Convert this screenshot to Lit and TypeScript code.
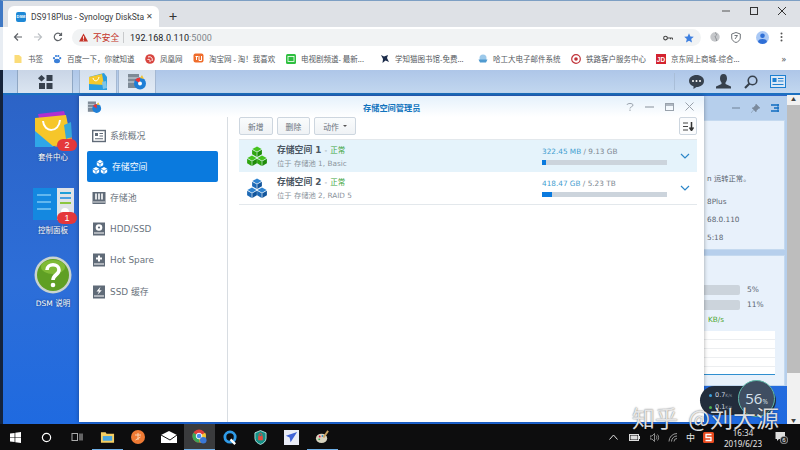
import { LitElement, html, css } from "lit";
import { customElement } from "lit/decorators.js";

const cube = (top: string, left: string, right: string) => html`
  <svg class="cube" viewBox="0 0 20 20" width="20" height="20">
    ${[[10, 0.5], [5, 9.5], [15, 9.5]].map(
      ([x, y]) => html`
        <svg x=${x - 5} y=${y} width="10" height="10" viewBox="0 0 10 10" overflow="visible">
          <path d="M5 0L9.6 2.6 5 5.2 .4 2.6z" fill=${top} />
          <path d="M.1 3.2L4.7 5.8V10.4L.1 7.8z" fill=${left} />
          <path d="M9.9 3.2L5.3 5.8V10.4L9.9 7.8z" fill=${right} />
        </svg>
      `
    )}
  </svg>
`;

const navIcons = [
  html`<svg viewBox="0 0 14 14" width="14" height="14"><rect x=".7" y="1.5" width="12.6" height="11" fill="none" stroke="#606b78" stroke-width="1.4"/><rect x="3" y="4" width="3" height="3" fill="#606b78"/><path d="M7.5 4.5H11M7.5 7H11M3 9.7H11" stroke="#606b78" stroke-width="1.1"/></svg>`,
  html`<svg viewBox="0 0 20 20" width="16" height="16"><path d="M10 1l4 2.3v4.4L10 10 6 7.7V3.3zM5 10l4 2.3v4.4L5 19l-4-2.3V12.3zM15 10l4 2.3v4.4L15 19l-4-2.3v-4.4z" fill="#fff"/><path d="M6 3.5L10 6l4-2.5M1 12.5L5 15l4-2.5M11 12.5L15 15l4-2.5M10 6v4M5 15v4M15 15v4" stroke="#0a7ade" stroke-width=".9" fill="none"/></svg>`,
  html`<svg viewBox="0 0 14 14" width="14" height="14"><rect x=".5" y="1" width="13" height="12" fill="#606b78"/><path d="M4 2.5V8.5M7 2.5V8.5M10 2.5V8.5" stroke="#fff" stroke-width="1.6"/><path d="M1 11H13" stroke="#fff" stroke-width=".8"/></svg>`,
  html`<svg viewBox="0 0 14 14" width="14" height="14"><rect x="1" y=".5" width="12" height="13" fill="#606b78"/><circle cx="7" cy="5.5" r="3.3" fill="#fff"/><circle cx="7" cy="5.5" r="1.1" fill="#606b78"/><path d="M2 11H12" stroke="#fff" stroke-width="1"/></svg>`,
  html`<svg viewBox="0 0 14 14" width="14" height="14"><rect x="1" y=".5" width="12" height="13" fill="#606b78"/><path d="M7 2.5V8.5M4 5.5H10" stroke="#fff" stroke-width="2"/><path d="M2 11H12" stroke="#fff" stroke-width="1"/></svg>`,
  html`<svg viewBox="0 0 14 14" width="14" height="14"><rect x="1" y=".5" width="12" height="13" fill="#606b78"/><path d="M8.5 1.8L4.5 6.5H7L5.5 9.8 9.8 5.2H7.3z" fill="#fff"/><path d="M2 11H12" stroke="#fff" stroke-width="1"/></svg>`,
];

const bookmarkIcons = [
  html`<svg viewBox="0 0 10 10" width="10" height="10"><path d="M1.5 1H6L8.5 3V9H1.5z" fill="#fbdc78"/></svg>`,
  html`<svg viewBox="0 0 10 10" width="10" height="10"><g fill="#3a7fd8"><ellipse cx="5" cy="7" rx="3" ry="2.2"/><circle cx="2" cy="4.2" r="1.1"/><circle cx="4" cy="2" r="1.1"/><circle cx="6.3" cy="2" r="1.1"/><circle cx="8.2" cy="4.2" r="1.1"/></g></svg>`,
  html`<svg viewBox="0 0 10 10" width="10" height="10"><circle cx="5" cy="5" r="4.8" fill="#d8453f"/><path d="M3 3C6 2 8 4 7 7M2.5 5.5C4.5 5 5.5 6 5 8" stroke="#fff" fill="none"/></svg>`,
  html`<svg viewBox="0 0 11 11" width="11" height="11"><rect x=".5" y=".5" width="10" height="9" rx="2" fill="#ef6c2b"/><path d="M2.5 3.5H5M3.5 3V7M6 3V7.5H8.5V3" stroke="#fff" fill="none"/></svg>`,
  html`<svg viewBox="0 0 10 10" width="10" height="10"><rect width="10" height="10" rx="1.5" fill="#2ebf3f"/><rect x="2" y="2.5" width="6" height="5" fill="none" stroke="#fff" stroke-width=".8"/></svg>`,
  html`<svg viewBox="0 0 10 10" width="10" height="10"><path d="M1 1L4 2.5 8 1 7 4 9 8 5.5 6.5 2.5 9 3 5z" fill="#1c2c4a"/></svg>`,
  html`<svg viewBox="0 0 10 10" width="10" height="10"><circle cx="5" cy="4" r="3.5" fill="#9cc9ea"/><path d="M.5 5.5H9.5L8 8.5H2z" fill="#4f9ad0"/></svg>`,
  html`<svg viewBox="0 0 10 10" width="10" height="10"><circle cx="5" cy="5" r="4.3" fill="none" stroke="#c0343a" stroke-width="1.2"/><circle cx="5" cy="5" r="1.8" fill="#c0343a"/></svg>`,
  html`<svg viewBox="0 0 10 10" width="10" height="10"><rect width="10" height="10" fill="#d3232f"/><text x="5" y="7.5" text-anchor="middle" font-size="6.5" font-weight="700" fill="#fff" font-family="Liberation Sans">JD</text></svg>`,
];

const bookmarks = [
  { label: "书签", width: 39 },
  { label: "百度一下，你就知道", width: 93 },
  { label: "凤凰网", width: 48 },
  { label: "淘宝网 - 淘！我喜欢", width: 93 },
  { label: "电视剧频道- 最新...", width: 94 },
  { label: "学知猫图书馆-免费...", width: 98 },
  { label: "哈工大电子邮件系统", width: 93 },
  { label: "铁路客户服务中心", width: 85 },
  { label: "京东网上商城-综合...", width: 85 },
];

const nav = ["系统概况", "存储空间", "存储池", "HDD/SSD", "Hot Spare", "SSD 缓存"];

const volumes = [
  { name: "存储空间 1", where: "位于 存储池 1, Basic", used: "322.45 MB", total: "9.13 GB", pct: 3.5, active: true },
  { name: "存储空间 2", where: "位于 存储池 2, RAID 5", used: "418.47 GB", total: "5.23 TB", pct: 8, active: false },
];

const taskIcons = [
  html`<svg viewBox="0 0 12 12" width="11" height="11"><path d="M0 1.7L5 1V5.7H0zM5.8 .9L12 0V5.7H5.8zM0 6.4H5V11L0 10.3zM5.8 6.4H12V12L5.8 11.1z" fill="#fff"/></svg>`,
  html`<svg viewBox="0 0 12 12" width="11" height="11"><circle cx="6" cy="6" r="4.5" fill="none" stroke="#fff" stroke-width="1.3"/></svg>`,
  html`<svg viewBox="0 0 12 12" width="12" height="12"><rect x="1" y="2.5" width="5.5" height="7" fill="none" stroke="#aaa"/><path d="M9 2.5V9.5M11 2.5V9.5" stroke="#bbb"/></svg>`,
  html`<svg viewBox="0 0 16 14" width="15" height="14"><path d="M1 2H6L7 3.5H15V13H1z" fill="#f5ce62"/><rect x="3" y="6" width="10" height="5" fill="#48a6e0"/></svg>`,
  html`<svg viewBox="0 0 14 14" width="14" height="14"><circle cx="7" cy="7" r="7" fill="#ef7a34"/><path d="M4 5H10M7 3V10M4.5 10L9.5 7" stroke="#fbd3b0" fill="none"/></svg>`,
  html`<svg viewBox="0 0 16 12" width="16" height="12"><path d="M0 4L8 0 16 4V12H0z" fill="#fff"/><path d="M0 4L9 9 16 4" fill="none" stroke="#111"/></svg>`,
  html`<svg viewBox="0 0 16 16" width="15" height="15"><circle cx="7.5" cy="7.5" r="7" fill="#e0403a"/><path d="M7.5 7.5L14 4A7 7 0 0 1 8 14.5z" fill="#f3c733"/><path d="M7.5 7.5L8 14.5A7 7 0 0 1 1.4 4z" fill="#3ba657"/><circle cx="7.5" cy="7.5" r="3" fill="#4a8bf0" stroke="#fff"/><circle cx="12" cy="12" r="3.5" fill="#3a78d8"/></svg>`,
  html`<svg viewBox="0 0 16 16" width="15" height="15"><circle cx="7.5" cy="7.5" r="5.5" fill="none" stroke="#2f9be8" stroke-width="3"/><path d="M8 10l5 5" stroke="#fff" stroke-width="2.5"/></svg>`,
  html`<svg viewBox="0 0 14 16" width="13" height="15"><path d="M7 .5L13 3V9C13 12 10 14.5 7 15.5 4 14.5 1 12 1 9V3z" fill="#149187" stroke="#dff" stroke-width=".8"/><rect x="4.5" y="6.5" width="5" height="4.5" fill="#e64a3c"/><path d="M5.5 6.5V5A1.5 1.5 0 0 1 8.5 5V6.5" stroke="#e64a3c" fill="none"/></svg>`,
  html`<svg viewBox="0 0 16 16" width="15" height="15"><rect width="16" height="16" fill="#e9ecf6"/><path d="M14 2L7 13 6 8 2 6zM7 13L4 10" fill="#3f63d6"/></svg>`,
  html`<svg viewBox="0 0 16 16" width="15" height="15"><ellipse cx="7" cy="10" rx="6" ry="5" fill="#d8d3bf"/><circle cx="5" cy="8" r="1" fill="#d14"/><circle cx="8" cy="7.5" r="1" fill="#38b"/><circle cx="4.5" cy="11" r="1" fill="#3a5"/><path d="M9 9L14 2" stroke="#c8a060" stroke-width="2"/></svg>`,
];

@customElement("app-root")
export class AppRoot extends LitElement {
  static styles = css`
    :host {
      display: flex;
      flex-direction: column;
      width: 800px;
      height: 450px;
      overflow: hidden;
      position: relative;
      font-family: "Noto Sans", "Noto Sans CJK SC", sans-serif;
      background: #fff;
    }
    svg {
      display: block;
      flex: none;
    }

    /* browser chrome */
    .tabstrip {
      height: 27px;
      flex: none;
      background: #dee1e6;
      border-top: 1px solid #7d9fc4;
      border-left: 3px solid #3f78c4;
      box-sizing: border-box;
      display: flex;
      align-items: flex-end;
      padding-left: 5px;
    }
    .tab {
      width: 151px;
      height: 21px;
      background: #fff;
      border-radius: 6px 6px 0 0;
      display: flex;
      align-items: center;
      padding: 0 8px;
      box-sizing: border-box;
      gap: 5px;
      font: 8.5px Roboto, "Noto Sans CJK SC", sans-serif;
      color: #3c4043;
      white-space: nowrap;
    }
    .favicon {
      width: 10px;
      height: 10px;
      border-radius: 2px;
      background: #1e88d6;
      color: #fff;
      font: 700 4px "Liberation Sans", sans-serif;
      display: flex;
      align-items: center;
      justify-content: center;
      flex: none;
    }
    .tab-title {
      width: 110px;
      flex: none;
    }
    .tab-close {
      font-size: 8px;
      color: #444;
    }
    .newtab {
      width: 28px;
      text-align: center;
      font-size: 15px;
      line-height: 22px;
      height: 22px;
      color: #333;
    }
    .winctl {
      margin-left: auto;
      display: flex;
      align-self: flex-start;
      align-items: center;
      height: 19px;
      margin-right: 13px;
      gap: 18px;
    }

    .toolbar {
      height: 20px;
      flex: none;
      display: flex;
      align-items: center;
      padding-left: 5px;
      box-sizing: border-box;
      background: #fff;
      border-left: 3px solid #e8edf3;
    }
    .navbtn {
      width: 20px;
      display: flex;
      justify-content: center;
    }
    .omnibox {
      margin-left: 4px;
      width: 629px;
      height: 17px;
      margin-top: 1px;
      border-radius: 9px;
      background: #f1f3f4;
      display: flex;
      align-items: center;
      padding: 0 7px;
      box-sizing: border-box;
      font: 9px Roboto, "Noto Sans CJK SC", sans-serif;
      flex: none;
    }
    .insecure {
      color: #c5352a;
      margin-left: 5px;
      font-size: 8.7px;
    }
    .sep {
      width: 1px;
      height: 11px;
      background: #c8cacc;
      margin: 0 6px 0 4px;
    }
    .url {
      color: #202124;
      letter-spacing: 0.1px;
    }
    .url span {
      color: #80868b;
    }
    .omni-right {
      margin-left: auto;
      display: flex;
      align-items: center;
      gap: 11px;
    }
    .tool-right {
      display: flex;
      align-items: center;
      margin-left: 9px;
      gap: 11px;
    }
    .avatar {
      width: 13px;
      height: 13px;
      border-radius: 50%;
      background: #a9c8f5;
      overflow: hidden;
      margin-left: 4px;
    }

    .bookmarks {
      height: 23px;
      flex: none;
      padding-left: 10px;
      display: flex;
      align-items: center;
      background: #fff;
      font-size: 7.5px;
      color: #55595e;
      position: relative;
      border-left: 3px solid #e8edf3;
    }
    .bm {
      display: flex;
      align-items: center;
      gap: 5px;
      flex: none;
      white-space: nowrap;
    }
    .chevrons {
      margin-left: auto;
      margin-right: 14px;
      font-size: 9px;
    }

    /* DSM */
    .page {
      flex: 1;
      position: relative;
      overflow: hidden;
      border-left: 3px solid #14233c;
      display: flex;
      flex-direction: column;
      background: linear-gradient(180deg, #2c62c4 0%, #2d6ed8 60%, #1f6ae0 100%);
    }
    .dsmbar {
      height: 25px;
      flex: none;
      box-sizing: border-box;
      background: linear-gradient(180deg, #aec6e8, #c2d7ef);
      border-bottom: 2px solid #1c70c0;
      display: flex;
      align-items: stretch;
      padding-left: 14px;
    }
    .menu {
      width: 56px;
      box-sizing: border-box;
      background: linear-gradient(180deg, #c9d5e6, #dbe5f1);
      border-left: 1px solid #8fa7c4;
      border-right: 1px solid #8fa7c4;
      display: grid;
      place-items: center;
    }
    .dsmtab {
      width: 38px;
      box-sizing: border-box;
      margin-left: 1px;
      background: linear-gradient(180deg, #d4dfed, #e2ebf5);
      border-left: 1px solid #a4b8d2;
      border-right: 1px solid #a4b8d2;
      display: grid;
      place-items: center;
    }
    .menu + .dsmtab {
      margin-left: 6px;
    }
    .dsm-right {
      margin-left: auto;
      display: flex;
      align-items: center;
      gap: 12.5px;
      border-left: 1px solid #a9bed8;
      padding: 0 14px 0 14px;
      margin-top: 3px;
      margin-bottom: 3px;
    }

    .shortcuts {
      width: 100px;
      padding-top: 14px;
      display: flex;
      flex-direction: column;
      align-items: center;
      color: #fff;
      font-size: 7.5px;
      line-height: 11px;
      font-family: "DejaVu Sans", "Noto Sans CJK SC", sans-serif;
      text-shadow: 0 0 2px rgba(0, 0, 0, 0.5);
    }
    .shortcut {
      height: 73px;
      display: flex;
      flex-direction: column;
      align-items: center;
      gap: 3px;
    }
    .shortcut-icon {
      position: relative;
      width: 42px;
      height: 40px;
      display: grid;
      place-items: center;
    }
    .badge {
      position: absolute;
      right: -3px;
      bottom: -2px;
      width: 20px;
      height: 12px;
      border-radius: 6px;
      background: #e5383b;
      color: #fff;
      font: 9px/12px "Liberation Sans", sans-serif;
      text-align: center;
      text-shadow: none;
    }

    .window {
      position: absolute;
      left: 76px;
      top: 26px;
      width: 625px;
      bottom: 2px;
      background: #fff;
      display: flex;
      flex-direction: column;
      font-family: "DejaVu Sans", "Noto Sans CJK SC", sans-serif;
      box-shadow: 0 0 4px rgba(0, 0, 0, 0.35);
    }
    .win-title {
      height: 21px;
      flex: none;
      background: linear-gradient(180deg, #e5f1fb, #fff);
      display: flex;
      align-items: center;
      padding: 0 10px 0 8px;
      position: relative;
    }
    .win-name {
      position: absolute;
      left: 284px;
      font-size: 8.2px;
      font-weight: 700;
      color: #1073bd;
      font-family: "Noto Sans CJK SC", sans-serif;
    }
    .win-ctl {
      margin-left: auto;
      display: flex;
      align-items: center;
      gap: 11px;
    }
    .win-body {
      flex: 1;
      display: flex;
      min-height: 0;
    }
    .sidebar {
      width: 149px;
      flex: none;
      box-sizing: border-box;
      border-right: 1px solid #d8dde2;
      padding: 3px 9px 0 8px;
      display: flex;
      flex-direction: column;
    }
    .nav-item {
      height: 31.2px;
      flex: none;
      display: flex;
      align-items: center;
      gap: 4px;
      padding-left: 5px;
      border-radius: 2px;
      color: #6a737d;
      font-size: 8.9px;
    }
    .nav-item.sel {
      background: #0a7ade;
      color: #fff;
    }
    .content {
      flex: 1;
      padding: 0 7px 0 11px;
      min-width: 0;
    }
    .actions {
      display: flex;
      gap: 4px;
      height: 19px;
    }
    .btn {
      height: 18px;
      box-sizing: border-box;
      padding: 0 8px;
      border: 1px solid #cdd6df;
      border-radius: 2px;
      background: linear-gradient(180deg, #fafcfd, #eff2f5);
      font-size: 7.8px;
      color: #6a737d;
      display: flex;
      align-items: center;
      gap: 4px;
    }
    .btn.sort {
      margin-left: auto;
      padding: 0;
      width: 18px;
      justify-content: center;
      background: #fbfcfd;
    }
    .caret {
      width: 0;
      height: 0;
      border: 2px solid transparent;
      border-top: 2.5px solid #555;
      border-bottom: 0;
    }
    .list {
      margin-top: 3px;
      border-top: 1px solid #e3e8ec;
    }
    .row {
      height: 32px;
      display: flex;
      align-items: center;
      padding: 0 7px 0 8px;
      border-bottom: 1px solid #e3e8ec;
    }
    .row.on {
      background: #e5f3fb;
      border-bottom: 0;
    }
    .vol {
      margin-left: 10px;
      width: 265px;
      display: flex;
      flex-direction: column;
      gap: 2px;
    }
    .vol-name {
      font-size: 8.8px;
      font-weight: 700;
      color: #4a5561;
      line-height: 12px;
    }
    .ok {
      font-size: 7.5px;
      font-weight: 400;
      color: #3fa63f;
    }
    .dash {
      font-size: 7.5px;
      font-weight: 400;
      color: #8a949e;
    }
    .vol-where {
      font-size: 7.3px;
      color: #8a939c;
      line-height: 10px;
    }
    .usage {
      width: 125px;
      display: flex;
      flex-direction: column;
      gap: 3px;
      margin-top: -1px;
    }
    .usage-text {
      font-size: 7.3px;
      line-height: 10px;
      color: #7d8791;
    }
    .usage-text b {
      font-weight: 400;
      color: #3f9ed0;
    }
    .track {
      height: 5px;
      background: #ccd4dc;
    }
    .fill {
      height: 100%;
      background: #0a7ade;
    }
    .chev {
      margin-left: auto;
    }

    /* window behind */
    .behind {
      position: absolute;
      left: 701px;
      top: 26px;
      width: 83px;
      height: 290px;
      display: flex;
      flex-direction: column;
      gap: 5px;
      font-family: "DejaVu Sans", "Noto Sans CJK SC", sans-serif;
      font-size: 7.3px;
      color: #5b6570;
      background: #b6cfec;
    }
    .behind-head {
      height: 24px;
      flex: none;
      margin-bottom: -5px;
      display: flex;
      align-items: center;
      justify-content: flex-end;
      gap: 11px;
      padding-right: 8px;
    }
    .panel {
      background: #e8f1fb;
      border: 1px solid #c4d9ef;
      border-left: 0;
      box-sizing: border-box;
      width: 81px;
    }
    .panel.health {
      height: 130px;
      padding: 53px 0 0 3px;
      display: flex;
      flex-direction: column;
      gap: 8px;
      white-space: nowrap;
      line-height: 10px;
    }
    .panel.health span:first-child {
      margin-bottom: 5px;
    }
    .panel.res {
      flex: 1;
      position: relative;
      padding-top: 26px;
      display: flex;
      flex-direction: column;
    }
    .res-row {
      display: flex;
      align-items: center;
      gap: 7px;
      height: 15px;
      font-size: 7.5px;
    }
    .res-bar {
      width: 36px;
      height: 10px;
      background: #ccd4dc;
      border-radius: 0 2px 2px 0;
    }
    .net {
      color: #4da52f;
      padding-left: 4px;
      line-height: 10px;
      margin: 3px 0 6px;
    }
    .chart {
      height: 44px;
      width: 71px;
      background: #fff;
      box-sizing: border-box;
      border-bottom: 1px solid #2f8fd0;
      background-image: repeating-linear-gradient(180deg, #fff 0 8px, #eceef0 8px 9px);
    }

    .scrollbar {
      position: absolute;
      right: 0;
      top: 25px;
      bottom: 0;
      width: 13px;
      background: #f1f1f1;
      display: flex;
      flex-direction: column;
      font-size: 5px;
      line-height: 8px;
      text-align: center;
      color: #444;
    }
    .thumb {
      height: 268px;
      margin-top: 2px;
      background: #bdbdbd;
    }
    .scroll-down {
      margin-top: auto;
    }

    .resmon {
      position: absolute;
      left: 697px;
      top: 316px;
      width: 76px;
      height: 29px;
      background: #222d3c;
      border-radius: 15px;
      color: #cfd8e2;
      font: 6.5px "DejaVu Sans", sans-serif;
      display: flex;
      flex-direction: column;
      justify-content: center;
      gap: 4px;
      padding-left: 9px;
      box-sizing: border-box;
    }
    .resmon i {
      font-style: normal;
      font-size: 4.5px;
      color: #8b97a5;
    }
    .dot {
      display: inline-block;
      width: 3px;
      height: 3px;
      border-radius: 50%;
      margin-right: 3px;
    }
    .gauge {
      position: absolute;
      right: 1px;
      top: -6px;
      width: 37px;
      height: 37px;
      box-sizing: border-box;
      border-radius: 50%;
      background: #3f4e62;
      border: 1px solid #5fb8a8;
      color: #d8e2ec;
      font: 15px/35px "Open Sans", sans-serif;
      text-align: center;
    }
    .gauge small {
      font-size: 6.5px;
    }
    .watermark {
      position: absolute;
      left: 632px;
      top: 403px;
      font: 23px/28px "Noto Sans CJK SC", sans-serif;
      color: rgba(240, 240, 240, 0.92);
      text-shadow: 0 0 1.5px rgba(0, 0, 0, 0.65);
      white-space: nowrap;
      word-spacing: 5px;
      z-index: 3;
    }

    /* windows taskbar */
    .taskbar {
      height: 26px;
      flex: none;
      background: #0d0d0e;
      display: flex;
      align-items: stretch;
      color: #e6e6e6;
    }
    .slot {
      width: 30.7px;
      display: grid;
      place-items: center;
      box-sizing: border-box;
    }
    .slot.run {
      border-bottom: 1.5px solid #6fb0e8;
    }
    .slot.cur {
      background: #3a3b3d;
    }
    .tray {
      margin-left: auto;
      display: flex;
      align-items: center;
      gap: 8px;
      padding-right: 12px;
      font-size: 9px;
    }
    .clock {
      text-align: center;
      font-size: 8px;
      line-height: 11px;
      width: 40px;
      margin: 1px 4px 0 1px;
      white-space: nowrap;
    }
    .up {
      margin-right: 3px;
    }
    .batt {
      margin-right: 2px;
    }
  `;

  render() {
    return html`
      <div class="tabstrip">
        <div class="tab">
          <span class="favicon">DSM</span>
          <span class="tab-title">DS918Plus - Synology DiskSta</span>
          <span class="tab-close">✕</span>
        </div>
        <div class="newtab">+</div>
        <div class="winctl">
          <svg width="10" height="10" viewBox="0 0 10 10"><path d="M1 5H9" stroke="#555"/></svg>
          <svg width="10" height="10" viewBox="0 0 10 10"><rect x="1.5" y="1.5" width="7" height="7" fill="none" stroke="#333"/></svg>
          <svg width="10" height="10" viewBox="0 0 10 10"><path d="M1 1L9 9M9 1L1 9" stroke="#333"/></svg>
        </div>
      </div>
      <div class="toolbar">
        <span class="navbtn"><svg width="10" height="10" viewBox="0 0 10 10"><path d="M9 5H1.5M5 1.5L1.5 5 5 8.5" fill="none" stroke="#5f6368" stroke-width="1.2"/></svg></span>
        <span class="navbtn"><svg width="10" height="10" viewBox="0 0 10 10"><path d="M1 5H8.5M5 1.5L8.5 5 5 8.5" fill="none" stroke="#bcc0c4" stroke-width="1.2"/></svg></span>
        <span class="navbtn"><svg width="10" height="10" viewBox="0 0 10 10"><path d="M8.5 6A3.7 3.7 0 1 1 7.8 2.5M8.5 .8V3.3H6" fill="none" stroke="#5f6368" stroke-width="1.2"/></svg></span>
        <div class="omnibox">
          <svg width="9" height="9" viewBox="0 0 10 10"><path d="M5 .5L10 9.5H0z" fill="#c5352a"/><path d="M5 3.5V6.5M5 7.3V8.5" stroke="#fff"/></svg>
          <span class="insecure">不安全</span>
          <span class="sep"></span>
          <span class="url">192.168.0.110<span>:5000</span></span>
          <div class="omni-right">
            <svg width="10" height="8" viewBox="0 0 12 8"><circle cx="3" cy="4" r="2.2" fill="none" stroke="#444" stroke-width="1.3"/><path d="M5 4H11.5V6M9 4V5.5" fill="none" stroke="#444" stroke-width="1.2"/></svg>
            <svg width="10" height="10" viewBox="0 0 10 10"><path d="M5 .3L6.4 3.5 9.8 3.8 7.2 6 8 9.5 5 7.7 2 9.5 2.8 6 .2 3.800 3.6 3.5z" fill="#3d7fe0"/></svg>
          </div>
        </div>
        <div class="tool-right">
          <svg width="10" height="10" viewBox="0 0 10 10"><circle cx="5" cy="5" r="4.7" fill="#c5c7ca"/><path d="M5 .5C7 2 7 3 5.5 4 4 5 7 6 6.5 9" stroke="#8f9296" fill="none"/></svg>
          <svg width="10" height="11" viewBox="0 0 10 11"><path d="M5 .5L9.3 2V6C9.3 8 7 10 5 10.5 3 10 .7 8 .7 6V2z" fill="none" stroke="#70757a"/><path d="M3.5 3.5H6.5L4 7" stroke="#70757a" fill="none"/></svg>
          <div class="avatar">
            <svg width="13" height="13" viewBox="0 0 13 13"><circle cx="6.5" cy="4.8" r="2.3" fill="#2f6fd6"/><ellipse cx="6.5" cy="11" rx="4.5" ry="3" fill="#2f6fd6"/></svg>
          </div>
          <svg width="3" height="10" viewBox="0 0 3 10"><g fill="#555"><circle cx="1.5" cy="1.5" r="1"/><circle cx="1.5" cy="5" r="1"/><circle cx="1.5" cy="8.5" r="1"/></g></svg>
        </div>
      </div>
      <div class="bookmarks">
        ${bookmarks.map(
          (b, i) => html`
            <div class="bm" style="width:${b.width}px">${bookmarkIcons[i]}<span>${b.label}</span></div>
          `
        )}
        <span class="chevrons">»</span>
      </div>

      <div class="page">
        <div class="dsmbar">
          <div class="menu">
            <svg width="15" height="14" viewBox="0 0 15 14"><g fill="#37414d"><path d="M3.5 0L7 3.3 3.5 6.6 0 3.3z"/><rect x="8.5" y="0" width="6" height="6"/><rect x="1" y="8" width="6" height="6"/><rect x="8.5" y="8" width="6" height="6"/></g></svg>
          </div>
          <div class="dsmtab">
            <svg width="20" height="19" viewBox="0 0 20 19"><path d="M1 5L16 1 19 5V18H1z" fill="#2a9ee0"/><path d="M1 5L14 2 16 13 1 12z" fill="#f5c92c"/><path d="M5 6C6 10 10 10 11 5" stroke="#fff" fill="none"/><path d="M14 10l4-1 1 7-4 1z" fill="#7cc5e8"/></svg>
          </div>
          <div class="dsmtab">
            <svg width="20" height="19" viewBox="0 0 20 19"><path d="M1 2H12V16H1z" fill="#7e8a96"/><path d="M1 6H12M1 10H12" stroke="#d5dce3"/><circle cx="13" cy="11.5" r="6" fill="#1f7fd6"/><path d="M13 11.5V5.5A6 6 0 0 0 8 8z" fill="#e33"/><path d="M13 6L15 3 17 7z" fill="#f3c330"/><circle cx="13" cy="11.5" r="2" fill="#fff"/></svg>
          </div>
          <div class="dsm-right">
            <svg width="15" height="14" viewBox="0 0 15 14"><path d="M7.5 0C11.6 0 15 2.500 15 6S11.6 12 7.5 12L4.5 14V11.3C1.8 10.3 0 8.4 0 6 0 2.5 3.4 0 7.5 0z" fill="#37414d"/><g fill="#fff"><circle cx="4" cy="6" r="1"/><circle cx="7.5" cy="6" r="1"/><circle cx="11" cy="6" r="1"/></g></svg>
            <svg width="15" height="15" viewBox="0 0 15 15"><path d="M7.5 0C10 0 11 2 11 4.5 11 6.5 10 8 9.5 8.5V10L15 12.5V14.5H0V12.5L5.5 10V8.5C5 8 4 6.5 4 4.5 4 2 5 0 7.5 0z" fill="#37414d"/></svg>
            <svg width="14" height="14" viewBox="0 0 14 14"><circle cx="8.5" cy="5.5" r="4.3" fill="none" stroke="#37414d" stroke-width="1.6"/><path d="M5.500 8.5L1 13" stroke="#37414d" stroke-width="2.2"/></svg>
            <svg width="16" height="13" viewBox="0 0 16 13"><rect x=".5" y=".5" width="15" height="12" fill="#dbe8f6" stroke="#1d7fd0"/><rect x="2.5" y="3" width="4" height="4" fill="#1d7fd0"/><path d="M8 3.5H13.5M8 6H13.5M2.5 9.5H13.5" stroke="#1d7fd0"/></svg>
          </div>
        </div>

        <div class="shortcuts">
          <div class="shortcut">
            <div class="shortcut-icon">
              <svg width="38" height="37" viewBox="0 0 38 37">
                <path d="M4 3L30 0 34 14 8 20z" fill="#b02fd0"/>
                <path d="M1 7L32 4 38 34 1 36z" fill="#f6c62a"/>
                <path d="M1 20L20 36H1z" fill="#2fa6e8"/>
                <path d="M20 36L38 26V34z" fill="#f08a3c"/>
                <path d="M9 10C10 22 25 22 26 9" fill="none" stroke="#fff" stroke-width="2"/>
                <path d="M30 14L37 11 38 26 32 28z" fill="#38a8d8"/>
              </svg>
              <span class="badge">2</span>
            </div>
            <span>套件中心</span>
          </div>
          <div class="shortcut">
            <div class="shortcut-icon">
              <svg width="41" height="37" viewBox="0 -4 41 37">
                <rect x="0" y="0" width="24" height="32" fill="#1488e0"/>
                <path d="M4 7H18M4 14H18M4 21H18" stroke="#7cc6f3" stroke-width="1.4"/>
                <rect x="24" y="0" width="17" height="32" fill="#dfe3e7"/>
                <path d="M27 5H38" stroke="#1f9fd8" stroke-width="2"/>
                <path d="M27 10H38" stroke="#4aa0e0" stroke-width="2"/>
                <path d="M27 15H38" stroke="#8cc63f" stroke-width="2"/>
                <circle cx="32" cy="24" r="4" fill="#fff"/>
              </svg>
              <span class="badge">1</span>
            </div>
            <span>控制面板</span>
          </div>
          <div class="shortcut">
            <div class="shortcut-icon">
              <svg width="38" height="38" viewBox="0 0 38 38">
                <circle cx="19" cy="19" r="18.5" fill="#c9d3cf"/>
                <circle cx="19" cy="19" r="16" fill="#5f9f24"/>
                <ellipse cx="19" cy="11" rx="12" ry="7" fill="#8dc63f" opacity=".7"/>
                <path d="M13 14C13 7 25 7 25 14 25 19 19 18.5 19 24" fill="none" stroke="#fff" stroke-width="3.6"/>
                <circle cx="19" cy="29" r="2.3" fill="#fff"/>
              </svg>
            </div>
            <span>DSM 说明</span>
          </div>
        </div>

        <div class="behind">
          <div class="behind-head">
            <svg width="8" height="8" viewBox="0 0 8 8"><path d="M0 4H8" stroke="#6f8196"/></svg>
            <svg width="9" height="9" viewBox="0 0 9 9"><path d="M5 0L9 4 7.5 4.5 5.5 6.500 5 8 1 4 2.5 3.5 4.5 1.5zM2.5 6L0 9" fill="#7b8a9c" stroke="#7b8a9c" stroke-width=".5"/></svg>
            <svg width="8" height="8" viewBox="0 0 8 8"><path d="M0 1H8M3 4H8M0 7H8" stroke="#0f6cc0" stroke-width="1.5"/><path d="M7 0V8" stroke="#0f6cc0"/></svg>
          </div>
          <div class="panel health">
            <span>n 运转正常。</span>
            <span>8Plus</span>
            <span>68.0.110</span>
            <span>5:18</span>
          </div>
          <div class="panel res">
            <div class="res-row"><span class="res-bar"></span><span>5%</span></div>
            <div class="res-row"><span class="res-bar"></span><span>11%</span></div>
            <div class="net">KB/s</div>
            <div class="chart"></div>
          </div>
        </div>

        <div class="window">
          <div class="win-title">
            <svg width="15" height="14" viewBox="0 0 20 19"><path d="M1 2H12V16H1z" fill="#7e8a96"/><path d="M1 6H12M1 10H12" stroke="#d5dce3"/><circle cx="13" cy="11.5" r="6" fill="#1f7fd6"/><path d="M13 11.5V5.5A6 6 0 0 0 8 8z" fill="#e33"/><path d="M13 6L15 3 17 7z" fill="#f3c330"/></svg>
            <span class="win-name">存储空间管理员</span>
            <div class="win-ctl">
              <svg width="8" height="8" viewBox="0 0 8 8"><path d="M1 2C1 0 7 0 7 2 7 4 4 3.5 4 5.5M4 6.5V8" fill="none" stroke="#99a2ac"/></svg>
              <svg width="9" height="8" viewBox="0 0 9 8"><path d="M0 4H9" stroke="#99a2ac" stroke-width="1.2"/></svg>
              <svg width="9" height="8" viewBox="0 0 9 8"><rect x=".5" y=".5" width="8" height="7" fill="none" stroke="#99a2ac"/><path d="M0 2H9" stroke="#99a2ac" stroke-width="1.5"/></svg>
              <svg width="9" height="9" viewBox="0 0 9 9"><path d="M.5 .5L8.5 8.5M8.5 .5L.5 8.5" stroke="#99a2ac"/></svg>
            </div>
          </div>
          <div class="win-body">
            <div class="sidebar">
              ${nav.map(
                (n, i) => html`
                  <div class="nav-item ${i === 1 ? "sel" : ""}">${navIcons[i]}<span>${n}</span></div>
                `
              )}
            </div>
            <div class="content">
              <div class="actions">
                <div class="btn">新增</div>
                <div class="btn">删除</div>
                <div class="btn">动作<span class="caret"></span></div>
                <div class="btn sort">
                  <svg width="11" height="9" viewBox="0 0 11 9"><path d="M0 1H5M0 4.5H5M0 8H5" stroke="#444" stroke-width="1.1"/><path d="M8.5 0V8M6.5 5.5L8.5 8.5 10.5 5.5" fill="none" stroke="#333" stroke-width="1.5"/></svg>
                </div>
              </div>
              <div class="list">
                ${volumes.map(
                  (v) => html`
                    <div class="row ${v.active ? "on" : ""}">
                      ${v.active ? cube("#45c31f", "#2ea50f", "#1f8c08") : cube("#2e83d0", "#1d69b5", "#12559c")}
                      <div class="vol">
                        <span class="vol-name">${v.name} <span class="dash">-</span> <span class="ok">正常</span></span>
                        <span class="vol-where">${v.where}</span>
                      </div>
                      <div class="usage">
                        <span class="usage-text"><b>${v.used}</b> / ${v.total}</span>
                        <div class="track"><div class="fill" style="width:${v.pct}%"></div></div>
                      </div>
                      <svg class="chev" width="10" height="6" viewBox="0 0 10 6"><path d="M1 1L5 5 9 1" fill="none" stroke="#2b86c8" stroke-width="1.2"/></svg>
                    </div>
                  `
                )}
              </div>
            </div>
          </div>
        </div>

        <div class="scrollbar">
          <div>▲</div>
          <div class="thumb"></div>
          <div class="scroll-down">▼</div>
        </div>
        <div class="resmon">
          <span><span class="dot" style="background:#3aa0e0"></span>0.7<i>K/s</i></span>
          <span><span class="dot" style="background:#4cb050"></span>0.1<i>K/s</i></span>
          <div class="gauge">56<small>%</small></div>
        </div>
      </div>

      <div class="watermark">知乎 @刘大源</div>

      <div class="taskbar">
        ${taskIcons.map(
          (icon, i) => html`
            <div class="slot ${[3, 6, 10].includes(i) ? "run" : ""} ${i === 6 ? "cur" : ""}">${icon}</div>
          `
        )}
        <div class="tray">
          <svg class="up" width="9" height="6" viewBox="0 0 9 6"><path d="M.5 5.5L4.5 1 8.5 5.5" fill="none" stroke="#ddd"/></svg>
          <svg class="batt" width="11" height="7" viewBox="0 0 11 7"><rect x=".5" y=".5" width="9" height="6" fill="none" stroke="#ddd"/><rect x="1.5" y="1.5" width="7" height="4" fill="#ddd"/><rect x="10" y="2" width="1" height="3" fill="#ddd"/></svg>
          <svg width="10" height="9" viewBox="0 0 10 9"><path d="M0 3H2L4.5 .5V8.500L2 6H0z" fill="none" stroke="#aaa" stroke-width=".8"/><path d="M6 2.5C7 3.5 7 5.5 6 6.5M7.5 1.5C9 3 9 6 7.5 7.5" fill="none" stroke="#aaa" stroke-width=".8"/></svg>
          <svg width="10" height="10" viewBox="0 0 10 10"><path d="M1 9.5A8 8 0 0 1 9 1.5M3.5 9.5A5.5 5.5 0 0 1 9 4M6 9.5A3 3 0 0 1 9 6.5" fill="none" stroke="#999"/></svg>
          <span>中</span>
          <svg width="11" height="11" viewBox="0 0 11 11"><rect width="11" height="11" rx="1.5" fill="#e8491d"/><path d="M8.5 2.5H3V5.5H8V8.5H2.5" fill="none" stroke="#fff" stroke-width="1.3"/></svg>
          <div class="clock">16:34<br />2019/6/23</div>
          <svg width="13" height="13" viewBox="0 0 13 13"><path d="M.5 1H10V8H4L2 10V8H.5z" fill="#ddd"/><circle cx="9" cy="9" r="3.8" fill="#222" stroke="#ddd" stroke-width=".6"/><text x="9" y="11" font-size="6" text-anchor="middle" fill="#fff" font-family="Liberation Sans">6</text></svg>
        </div>
      </div>
    `;
  }
}

declare global {
  interface HTMLElementTagNameMap {
    "app-root": AppRoot;
  }
}
